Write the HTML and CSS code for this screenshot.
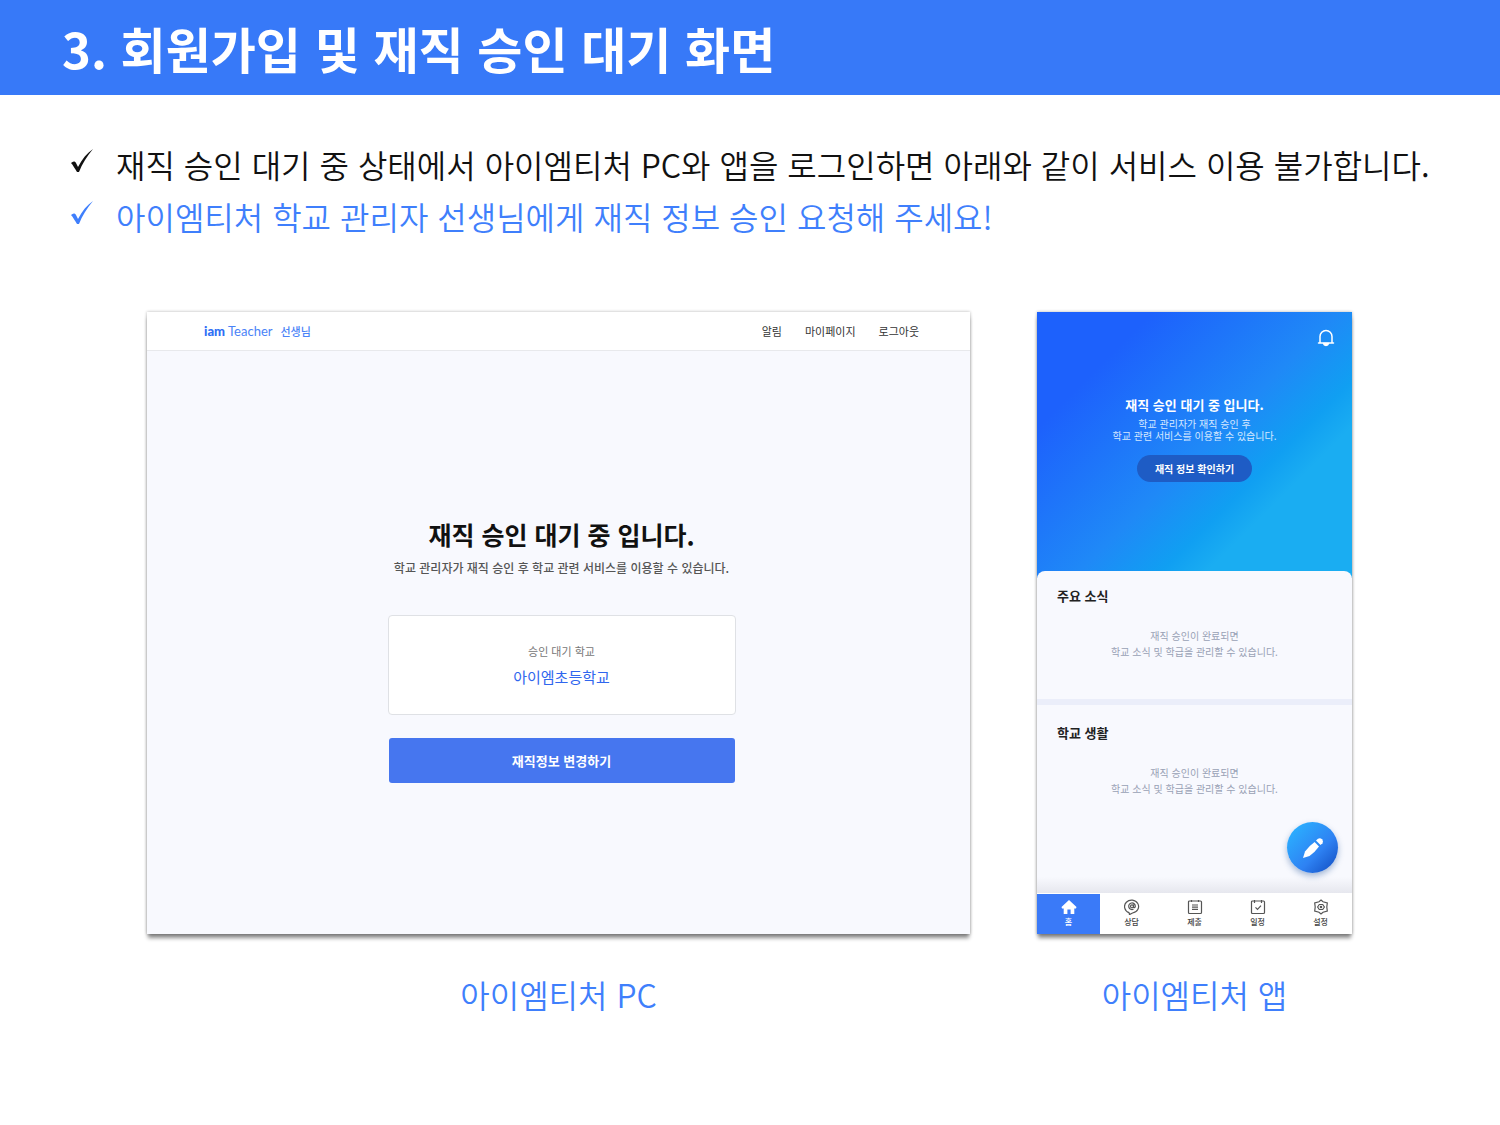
FILE: index.html
```html
<!DOCTYPE html>
<html lang="ko">
<head>
    <meta charset="UTF-8">
    <meta name="viewport" content="width=device-width, initial-scale=1.0">
    <title>회원가입 및 재직 승인 대기 화면</title>
    <link rel="stylesheet" href="styles.css">
</head>
<body>
    <header class="title-bar">
        <h1>3. 회원가입 및 재직 승인 대기 화면</h1>
    </header>

    <main>
        <ul class="notes">
            <li>
                <svg class="check" viewBox="0 0 24 26"><path d="M1 15 C3 13 5 13 6 15 L8 19 C12 11 17 5 23 1 C17 8 12 16 9 24 L7 24 C5 21 3 17 1 15Z"/></svg>
                <span>재직 승인 대기 중 상태에서 아이엠티처 PC와 앱을 로그인하면 아래와 같이 서비스 이용 불가합니다.</span>
            </li>
            <li class="blue">
                <svg class="check" viewBox="0 0 24 26"><path d="M1 15 C3 13 5 13 6 15 L8 19 C12 11 17 5 23 1 C17 8 12 16 9 24 L7 24 C5 21 3 17 1 15Z"/></svg>
                <span>아이엠티처 학교 관리자 선생님에게 재직 정보 승인 요청해 주세요!</span>
            </li>
        </ul>

        <div class="screens">
            <figure>
                <section class="screen pc">
                    <div class="pc-header">
                        <a class="logo" href="#"><b>iam</b><span>Teacher</span><strong>선생님</strong></a>
                        <nav class="pc-menu">
                            <a href="#">알림</a>
                            <a href="#">마이페이지</a>
                            <a href="#">로그아웃</a>
                        </nav>
                    </div>
                    <div class="pc-content">
                        <h2>재직 승인 대기 중 입니다.</h2>
                        <p class="pc-text">학교 관리자가 재직 승인 후 학교 관련 서비스를 이용할 수 있습니다.</p>
                        <div class="school">
                            <span class="school-label">승인 대기 학교</span>
                            <span class="school-name">아이엠초등학교</span>
                        </div>
                        <button class="change">재직정보 변경하기</button>
                    </div>
                </section>
                <figcaption>아이엠티처 PC</figcaption>
            </figure>

            <figure>
                <section class="screen app">
                    <div class="hero">
                        <button class="bell" aria-label="알림">
                            <svg viewBox="0 0 18 20" fill="none" stroke="#fff" stroke-width="1.5" stroke-linejoin="round" stroke-linecap="round"><path d="M3 14.5V8.5a6 6 0 0 1 12 0v6M1.5 15h15"/><path d="M6.5 15.5a2.6 2.6 0 0 0 5 0z" fill="#fff"/></svg>
                        </button>
                        <h2>재직 승인 대기 중 입니다.</h2>
                        <p>학교 관리자가 재직 승인 후<br>학교 관련 서비스를 이용할 수 있습니다.</p>
                        <button class="confirm">재직 정보 확인하기</button>
                    </div>
                    <div class="feed">
                        <section class="news">
                            <h3>주요 소식</h3>
                            <p>재직 승인이 완료되면<br>학교 소식 및 학급을 관리할 수 있습니다.</p>
                        </section>
                        <section class="life">
                            <h3>학교 생활</h3>
                            <p>재직 승인이 완료되면<br>학교 소식 및 학급을 관리할 수 있습니다.</p>
                        </section>
                        <button class="write" aria-label="글쓰기">
                            <svg viewBox="0 0 24 24" fill="#fff"><path d="M2 22 L4 15.5 Q8 10 13.6 6 L18 10.4 Q14 16 8.5 20Z"/><path d="M15 4.6 L17 2.7 A3.3 3.3 0 0 1 21.5 7.2 L19.5 9.1Z"/></svg>
                        </button>
                    </div>
                    <nav class="tabs">
                        <a class="active" href="#">
                            <svg viewBox="0 0 16 16"><path d="M8 1 L0.5 8 L1 9.5 H2.7 V15 H6.4 V10.5 H9.6 V15 H13.3 V9.5 H15 L15.5 8Z"/></svg>
                            홈
                        </a>
                        <a href="#">
                            <svg viewBox="0 0 16 16"><path d="M5 13.6 A7 6.5 0 1 1 8.5 14 L5.5 15.6Z"/><circle cx="8" cy="7.3" r="1.5"/><path d="M9.5 5.5v3q1.5.6 1.8-1.2a3.3 3.3 0 1 0-1.8 2.9"/></svg>
                            상담
                        </a>
                        <a href="#">
                            <svg viewBox="0 0 16 16"><rect x="1.5" y="2" width="13" height="12.5" rx="1"/><path d="M4.5 1v2M11.5 1v2M5 6h6M5 8.2h6M5 10.4h6"/></svg>
                            제출
                        </a>
                        <a href="#">
                            <svg viewBox="0 0 16 16"><rect x="1.5" y="2" width="13" height="12.5" rx="1"/><path d="M4.5 1v3M11.5 1v3M5.5 8.3l2 2 3.5-3.6"/></svg>
                            일정
                        </a>
                        <a href="#">
                            <svg viewBox="0 0 16 16"><path d="M8 1 L10 2.8 L14.3 4 L13.8 8 L14.3 12 L10 13.2 L8 15 L6 13.2 L1.7 12 L2.2 8 L1.7 4 L6 2.8Z"/><path d="M4.6 8 L6.3 5.5 H9.7 L11.4 8 L9.7 10.5 H6.3Z"/><circle cx="8" cy="8" r="0.7"/></svg>
                            설정
                        </a>
                    </nav>
                </section>
                <figcaption>아이엠티처 앱</figcaption>
            </figure>
        </div>
    </main>
</body>
</html>
```
FILE: styles.css
```css
* {
    box-sizing: border-box;
    margin: 0;
    padding: 0;
}

body {
    background: #fff;
    color: #111;
    font-family: "Noto Sans CJK KR", sans-serif;
}

a {
    color: inherit;
    text-decoration: none;
}

button {
    border: none;
    font-family: inherit;
    color: #fff;
    cursor: pointer;
}

svg {
    display: block;
}

.title-bar {
    padding: 12px 62px 11px;
    background: #3779f8;
    color: #fff;
}

.title-bar h1 {
    font-size: 49px;
    line-height: 72px;
    font-weight: 700;
}

.notes {
    list-style: none;
    padding: 43px 30px 0 70px;
}

.notes li {
    display: flex;
    gap: 22px;
    font-size: 32px;
    line-height: 52px;
    font-weight: 350;
}

.notes .blue {
    color: #3f7ffc;
}

.check {
    flex: none;
    width: 24px;
    height: 26px;
    margin-top: 10px;
    fill: currentColor;
}

/* screens */
.screens {
    display: grid;
    grid-template-columns: 823fr 315fr;
    gap: 67px;
    padding: 70px 148px 0 147px;
}

figure {
    display: flex;
    flex-direction: column;
}

figcaption {
    padding-top: 34px;
    font-size: 32px;
    line-height: 52px;
    font-weight: 350;
    color: #3f7ffc;
    text-align: center;
}

.screen {
    flex: 1;
    display: flex;
    flex-direction: column;
    background: #f8f9fe;
    box-shadow: 0 5px 4px -1px rgba(0, 0, 0, 0.45), 0 0 3px rgba(0, 0, 0, 0.3);
}

/* PC */
.pc-header {
    display: flex;
    align-items: center;
    justify-content: space-between;
    height: 39px;
    padding: 0 51px 0 57px;
    background: #fff;
    border-bottom: 1px solid #e8e9ec;
}

.logo {
    display: flex;
    align-items: center;
    font-family: Lato, "Noto Sans CJK KR", sans-serif;
    font-size: 13px;
    color: #4a83f7;
}

.logo b {
    font-weight: 900;
    color: #2f6ff5;
    margin-right: 3px;
}

.logo strong {
    margin-left: 8px;
    font-size: 11px;
    font-weight: 500;
}

.pc-menu {
    display: flex;
    gap: 23px;
    font-size: 11px;
    color: #333;
}

.pc-content {
    display: flex;
    flex-direction: column;
    align-items: center;
    padding: 163px 0 0 6px;
}

.pc-content h2 {
    font-size: 25px;
    line-height: 40px;
    font-weight: 700;
}

.pc-text {
    margin-top: 2px;
    font-size: 12px;
    line-height: 24px;
    font-weight: 500;
    color: #555;
}

.school {
    display: flex;
    flex-direction: column;
    align-items: center;
    width: 348px;
    margin: 35px 0 23px;
    padding: 23px 0;
    background: #fff;
    border: 1px solid #dfe1e5;
    border-radius: 4px;
}

.school-label {
    font-size: 11px;
    line-height: 24px;
    color: #777;
}

.school-name {
    font-size: 15px;
    line-height: 28px;
    color: #2f66ee;
}

.change {
    width: 346px;
    height: 45px;
    background: #4676ef;
    border-radius: 3px;
    font-size: 13px;
    font-weight: 700;
}

/* app */
.hero {
    display: flex;
    flex-direction: column;
    align-items: center;
    padding: 16px 17px 96px;
    background: linear-gradient(135deg, #1d61fc 20%, #1f89f7 52%, #109ff2 66%, #1aadf2 74%);
    color: #fff;
    text-align: center;
}

.bell {
    align-self: flex-end;
    width: 18px;
    height: 20px;
    background: none;
}

.hero h2 {
    margin-top: 46px;
    font-size: 13px;
    line-height: 22px;
    font-weight: 700;
}

.hero p {
    font-size: 10px;
    line-height: 12px;
    margin: 2px 0 13px;
    color: #d5e8ff;
}

.confirm {
    width: 115px;
    height: 27px;
    background: #1e5cc5;
    border-radius: 14px;
    font-size: 10px;
    font-weight: 700;
}

.feed {
    position: relative;
    margin-top: -7px;
    background: linear-gradient(#f8f9fe 95%, #e6e7ee);
    border-radius: 8px 8px 0 0;
}

.feed h3 {
    padding: 0 20px;
    font-size: 13px;
    line-height: 20px;
    font-weight: 700;
    color: #222;
}

.feed p {
    margin-top: 22px;
    font-size: 10px;
    line-height: 16px;
    color: #98a1b5;
    text-align: center;
}

.news {
    padding: 15px 0 39px;
    border-bottom: 6px solid #ebeefa;
}

.life {
    padding: 18px 0 96px;
}

.write {
    position: absolute;
    right: 14px;
    bottom: 20px;
    display: grid;
    place-items: center;
    width: 51px;
    height: 51px;
    border-radius: 50%;
    background: linear-gradient(135deg, #2bb0ff 10%, #2e82f3 60%, #1450c4 95%);
    box-shadow: 0 3px 6px rgba(30, 80, 150, 0.4);
}

.write svg {
    width: 24px;
    height: 24px;
}

.tabs {
    display: grid;
    grid-template-columns: repeat(5, 1fr);
    background: #fff;
    border-top: 1px solid #fff;
    font-size: 8px;
    line-height: 12px;
    font-weight: 500;
    color: #444;
}

.tabs a {
    display: flex;
    flex-direction: column;
    align-items: center;
    gap: 1px;
    padding: 5px 0 6px;
}

.tabs svg {
    width: 16px;
    height: 16px;
    fill: none;
    stroke: #555;
    stroke-width: 1.2;
}

.tabs .active {
    background: #3a7af8;
    color: #fff;
}

.tabs .active svg {
    fill: #fff;
    stroke: none;
}
```
